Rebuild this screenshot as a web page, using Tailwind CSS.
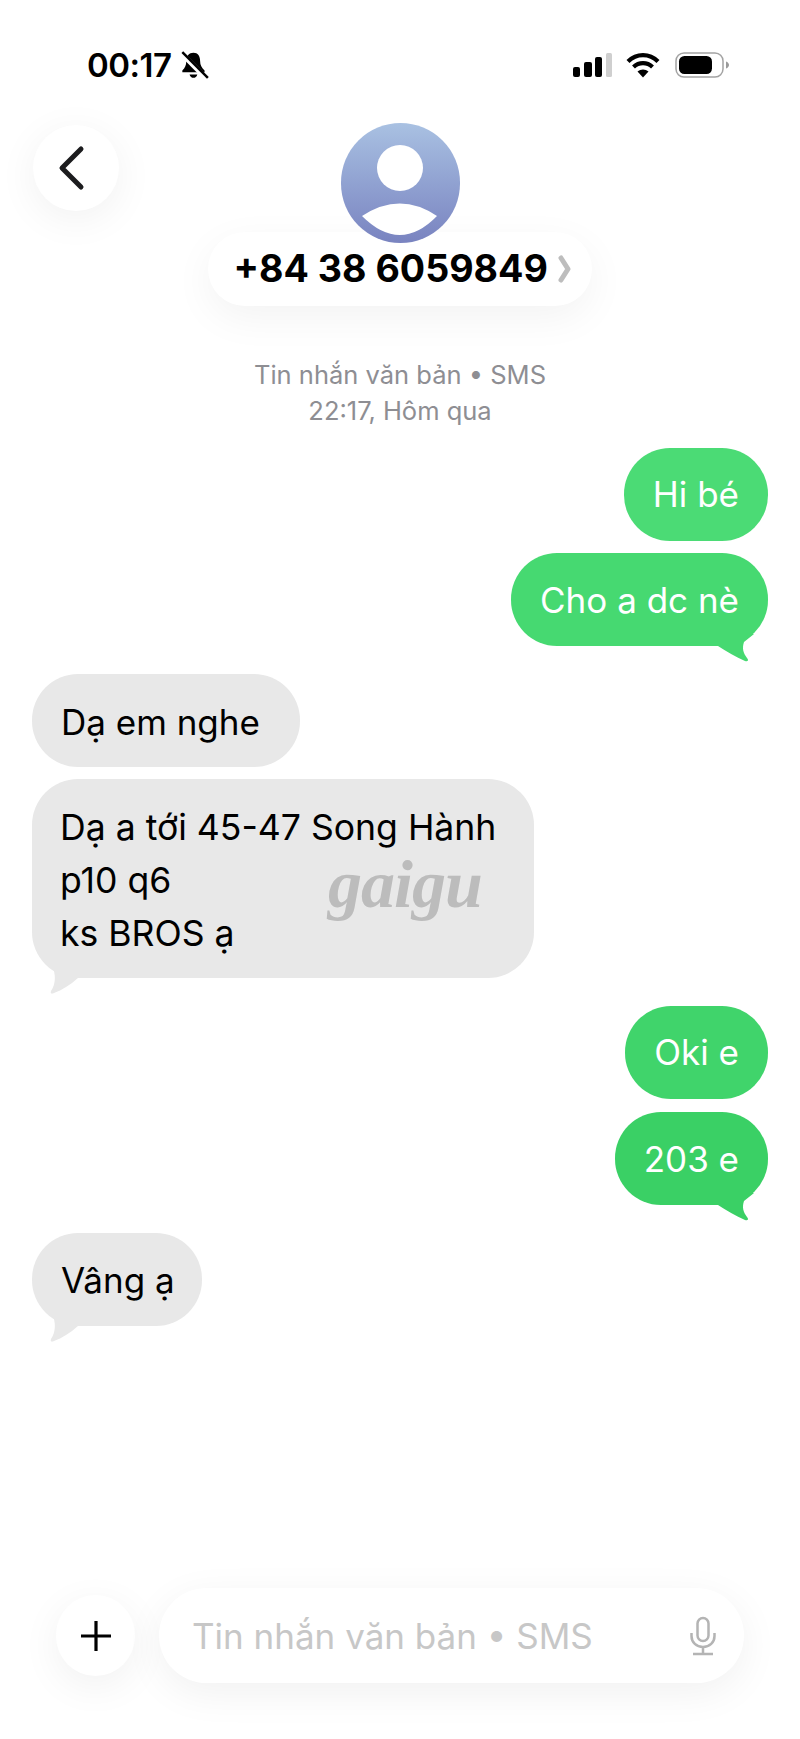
<!DOCTYPE html>
<html lang="vi">

<head>
  <meta charset="UTF-8">
  <meta name="viewport" content="width=device-width, initial-scale=1.0">
  <title>Tin nhắn</title>
  <script src="https://cdn.jsdelivr.net/npm/@tailwindcss/browser@4"></script>
</head>

<body class="bg-white">
  <div class="w-[800px] h-[1739px] flex flex-col overflow-hidden bg-white text-black font-['Inter',sans-serif]">

    <!-- status bar -->
    <div class="h-[52px] mt-[39px] flex items-center pl-[87px] pr-[70px] shrink-0">
      <span class="text-[33px] leading-[32px] font-semibold tracking-[-0.5px]">00:17</span>
      <svg class="ml-[7px]" width="30" height="30" viewBox="0 0 27 27">
        <path d="M13 2.500c-4 0-6.500 3-6.500 7.500 0 4-1 6-3.500 8.500V20h20v-1.500c-2.500-2.500-4-4.500-4-8.500 0-4.500-2-7.500-6-7.500z" fill="#000"/>
        <path d="M9.500 22h7c-.5 2-2 3-3.500 3s-3-1-3.500-3z" fill="#000"/>
        <path d="M2 3l23 23" stroke="#fff" stroke-width="4.500"/>
        <path d="M3 2l23 23" stroke="#000" stroke-width="2.200"/>
      </svg>
      <div class="ml-auto flex items-center">
        <svg width="40" height="26" viewBox="0 0 40 26">
          <rect x="0" y="15" width="7" height="10" rx="2" fill="#000"/>
          <rect x="11" y="10" width="8" height="15" rx="2" fill="#000"/>
          <rect x="22" y="5" width="7" height="20" rx="2" fill="#000"/>
          <rect x="33" y="1" width="6" height="24" rx="1.500" fill="#cfcfcf"/>
        </svg>
        <svg class="ml-[13px]" width="34" height="26" viewBox="0 0 34 26">
          <path d="M2 9.500C10.500 1 23.500 1 32 9.500" fill="none" stroke="#000" stroke-width="4.200"/>
          <path d="M7.500 15c5.500-5.200 13.500-5.200 19 0" fill="none" stroke="#000" stroke-width="4.200"/>
          <path d="M11.500 19.500c3.200-2.800 7.800-2.800 11 0L17 25.500z" fill="#000"/>
        </svg>
        <svg class="ml-[15px]" width="55" height="27" viewBox="0 0 55 27">
          <rect x="1" y="1" width="47" height="24" rx="8" fill="none" stroke="#a3a3a3" stroke-width="1.500"/>
          <rect x="4" y="4" width="33" height="18" rx="5.500" fill="#000"/>
          <path d="M51 9.500c1.800.6 3 2 3 3.500s-1.200 2.900-3 3.500z" fill="#9a9a9a"/>
        </svg>
      </div>
    </div>

    <!-- header -->
    <div class="relative mt-[32px] flex flex-col items-center shrink-0">
      <div class="absolute left-[33px] top-[2px] w-[86px] h-[86px] rounded-full bg-white flex items-center justify-center shadow-[0_8px_40px_rgba(0,0,0,0.06)]">
        <svg class="mr-[10px]" width="30" height="46" viewBox="0 0 30 46">
          <path d="M25 4L6 23l19 19" fill="none" stroke="#1c1c1e" stroke-width="5" stroke-linecap="round" stroke-linejoin="round"/>
        </svg>
      </div>
      <div class="relative z-10 w-[119px] h-[120px] rounded-full overflow-hidden bg-linear-to-b from-[#a9c1e2] to-[#7983c0]">
        <svg width="119" height="120" viewBox="0 0 119 120">
          <circle cx="59" cy="45" r="23" fill="#fff"/>
          <path d="M21 93Q59 68 96 93Q59 131 21 93z" fill="#fff"/>
        </svg>
      </div>
      <div class="-mt-[11px] w-[384px] h-[74px] rounded-full bg-white flex items-center pl-[26px] ml-[-1px] shadow-[0_12px_40px_rgba(0,0,0,0.05)]">
        <span class="text-[37.600px] leading-[44px] font-bold whitespace-nowrap">+84 38 6059849</span>
        <svg class="ml-[10px]" width="13" height="28" viewBox="0 0 13 28">
          <path d="M3 3l7 11-7 11" fill="none" stroke="#bdbdbd" stroke-width="5" stroke-linecap="round" stroke-linejoin="round"/>
        </svg>
      </div>
    </div>

    <!-- sms label -->
    <div class="mt-[51px] text-center text-[25.500px] leading-[36px] text-[#8e8e93] shrink-0">
      <div>Tin nhắn văn bản • SMS</div>
      <div>22:17, Hôm qua</div>
    </div>

    <!-- messages -->
    <div class="mt-[19px] px-[32px] flex flex-col text-[35px] leading-[53px] shrink-0">
      <div class="self-end bg-[#4bdb75] text-white rounded-[46px] px-[29px] py-[20px]">Hi bé</div>

      <div class="relative self-end mt-[12px] bg-[#46d971] text-white rounded-[46px] px-[29px] pt-[21px] pb-[19px]">
        Cho a dc nè
        <svg class="absolute right-0 top-[73px]" width="60" height="40" viewBox="0 0 60 40">
          <path d="M10 20C18 25 28 31 37 35C40 36 41 34 39 32C35 27 34 22 36 16L46 8H10Z" fill="#46d971"/>
        </svg>
      </div>

      <div class="self-start mt-[28px] w-[268px] bg-[#e8e8e8] rounded-[46px] pl-[29px] pt-[22px] pb-[18px]">Dạ em nghe</div>

      <div class="relative self-start w-[502px] mt-[12px] bg-[#e8e8e8] rounded-[46px] pl-[28px] pt-[22px] pb-[18px] text-[35.600px]">
        <div>Dạ a tới 45-47 Song Hành</div>
        <div>p10 q6</div>
        <div>ks BROS ạ</div>
        <span class="absolute left-[296px] top-[65px] text-[68px] leading-[80px] font-bold italic text-[#bcbcbc] font-['Liberation_Serif',serif] tracking-[-1px]">gaigu</span>
        <svg class="absolute left-0 top-[179px]" width="60" height="40" viewBox="0 0 60 40">
          <path d="M20 8C24 16 24 26 19 33C18 36 20 36 22 35C30 32 38 27 46 20V8Z" fill="#e8e8e8"/>
        </svg>
      </div>

      <div class="self-end mt-[28px] bg-[#40d46b] text-white rounded-[46px] px-[29px] py-[20px]">Oki e</div>

      <div class="relative self-end mt-[13px] bg-[#3ad065] text-white rounded-[46px] px-[29px] pt-[21px] pb-[19px]">
        203 e
        <svg class="absolute right-0 top-[73px]" width="60" height="40" viewBox="0 0 60 40">
          <path d="M10 20C18 25 28 31 37 35C40 36 41 34 39 32C35 27 34 22 36 16L46 8H10Z" fill="#3ad065"/>
        </svg>
      </div>

      <div class="relative self-start mt-[28px] bg-[#e8e8e8] rounded-[46px] pl-[29px] pr-[27px] pt-[21px] pb-[19px]">
        Vâng ạ
        <svg class="absolute left-0 top-[73px]" width="60" height="40" viewBox="0 0 60 40">
          <path d="M20 8C24 16 24 26 19 33C18 36 20 36 22 35C30 32 38 27 46 20V8Z" fill="#e8e8e8"/>
        </svg>
      </div>
    </div>

    <!-- input bar -->
    <div class="mt-auto mb-[56px] pl-[56px] pr-[56px] flex items-center shrink-0">
      <div class="w-[79px] h-[81px] rounded-full bg-white flex items-center justify-center shadow-[0_10px_40px_rgba(0,0,0,0.06)]">
        <svg width="32" height="32" viewBox="0 0 32 32">
          <path d="M1 16h30M16 1v30" stroke="#000" stroke-width="3.200"/>
        </svg>
      </div>
      <div class="ml-[24px] flex-1 h-[95px] rounded-full bg-white flex items-center pl-[33px] pr-[27px] shadow-[0_10px_40px_rgba(0,0,0,0.06)]">
        <span class="text-[35px] leading-[44px] text-[#c7c7c7] whitespace-nowrap">Tin nhắn văn bản • SMS</span>
        <svg class="ml-auto" width="28" height="40" viewBox="0 0 28 40">
          <rect x="8.500" y="2" width="11" height="23" rx="5.500" fill="none" stroke="#b4b4b4" stroke-width="2.500"/>
          <path d="M2.500 17v3c0 6.500 5 11 11.500 11s11.500-4.500 11.500-11v-3M14 31v6M4 38h20" fill="none" stroke="#b4b4b4" stroke-width="2.500"/>
        </svg>
      </div>
    </div>
  </div>
</body>

</html>
